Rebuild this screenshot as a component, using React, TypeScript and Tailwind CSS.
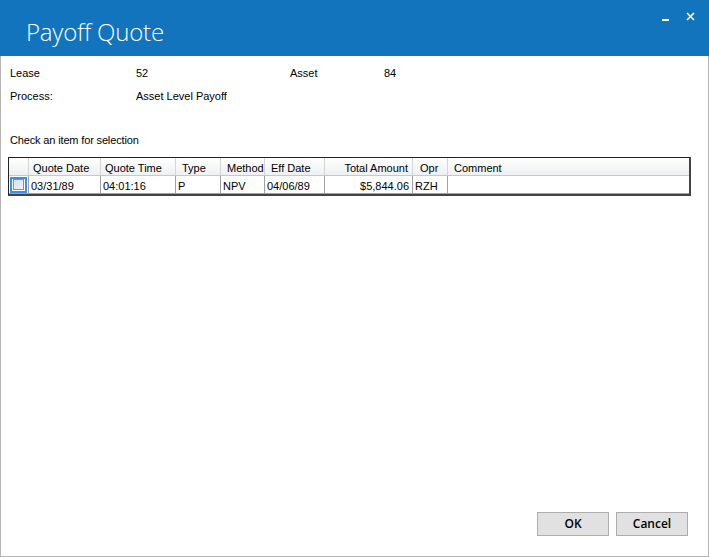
import React from "react";

const cols = [
  { w: 20, label: "", val: "", align: "left", hp: "" },
  { w: 72, label: "Quote Date", val: "03/31/89", align: "left", hp: "pl-[4px]" },
  { w: 75, label: "Quote Time", val: "04:01:16", align: "left", hp: "pl-[4px]" },
  { w: 45, label: "Type", val: "P", align: "left", hp: "pl-[6px]" },
  { w: 44, label: "Method", val: "NPV", align: "left", hp: "pl-[6px]" },
  { w: 60, label: "Eff Date", val: "04/06/89", align: "left", hp: "pl-[6px]" },
  { w: 88, label: "Total Amount", val: "$5,844.06", align: "right", hp: "pr-[4px]" },
  { w: 35, label: "Opr", val: "RZH", align: "left", hp: "pl-[7px]" },
];

export default function App() {
  const font = { fontFamily: '"Liberation Sans", Arial, sans-serif' };
  return (
    <div className="w-[709px] h-[557px] flex flex-col bg-white text-[11px] text-black" style={font}>
      <div className="h-[56px] bg-[#1174bd] flex items-start justify-between shrink-0">
        <div
          className="pl-[26px] pt-[17px] text-[24px] font-light text-white leading-[30px] tracking-[-0.2px]"
          style={{ fontFamily: '"Open Sans", sans-serif' }}
        >
          Payoff Quote
        </div>
        <div className="flex items-start gap-[17px] pr-[14px] pt-[11px]">
          <div className="w-[7px] h-[2px] bg-white mt-[8px]" />
          <svg width="9" height="9" viewBox="0 0 9 9" className="mt-[1px]">
            <path d="M1 1 L8 8 M8 1 L1 8" stroke="white" strokeWidth="1.6" />
          </svg>
        </div>
      </div>
      <div className="flex-1 flex flex-col border-x border-b border-[#b4b4b4] pl-[9px] pr-[20px]">
        <div className="grid grid-cols-[126px_154px_94px_1fr] auto-rows-[23px] items-center pt-[6px]">
          <div>Lease</div>
          <div>52</div>
          <div>Asset</div>
          <div>84</div>
          <div>Process:</div>
          <div>Asset Level Payoff</div>
          <div />
          <div />
        </div>
        <div className="mt-[25px] leading-[14px] tracking-[-0.15px]">Check an item for selection</div>
        <div className="mt-[10px] -ml-[2px] w-[683px] border border-[#222] border-r-2 border-b-2 border-r-[#444] border-b-[#444]">
          <div className="flex h-[18px] bg-gradient-to-b from-white to-[#eef0f3] border-b border-[#c8c8c8]">
            {cols.map((c, i) => (
              <div
                key={i}
                className={`shrink-0 border-r border-[#d6d6d6] flex items-center pt-[3px] ${c.hp} ${
                  c.align === "right" ? "justify-end" : "justify-start"
                }`}
                style={{ width: c.w }}
              >
                {c.label}
              </div>
            ))}
            <div className="flex-1 flex items-center pt-[3px] px-[6px]">Comment</div>
          </div>
          <div className="flex h-[18px] bg-white">
            <div className="shrink-0 w-[20px] border-r border-b border-[#a0a0a0] flex items-center justify-center">
              <div className="w-[17px] h-[16px] border-2 border-[#3d8ee6] flex items-center justify-center">
                <div className="w-[11px] h-[11px] border border-[#8e8f8f] bg-gradient-to-br from-[#dcdcdc] to-[#f5f5f5]" />
              </div>
            </div>
            {cols.slice(1).map((c, i) => (
              <div
                key={i}
                className={`shrink-0 border-r border-b border-[#a0a0a0] flex items-center pt-[3px] px-[2px] ${
                  c.align === "right" ? "justify-end pr-[3px]" : "justify-start"
                }`}
                style={{ width: c.w }}
              >
                {c.val}
              </div>
            ))}
            <div className="flex-1 border-b border-[#a0a0a0]" />
          </div>
        </div>
        <div className="mt-auto flex justify-end gap-[7px] pb-[20px]">
          <button
            className="w-[72px] h-[24px] bg-[#e1e1e1] border border-[#adadad] text-[12px] font-semibold"
            style={{ fontFamily: '"Open Sans", sans-serif' }}
          >
            OK
          </button>
          <button
            className="w-[72px] h-[24px] bg-[#e1e1e1] border border-[#adadad] text-[12px] font-semibold"
            style={{ fontFamily: '"Open Sans", sans-serif' }}
          >
            Cancel
          </button>
        </div>
      </div>
    </div>
  );
}
